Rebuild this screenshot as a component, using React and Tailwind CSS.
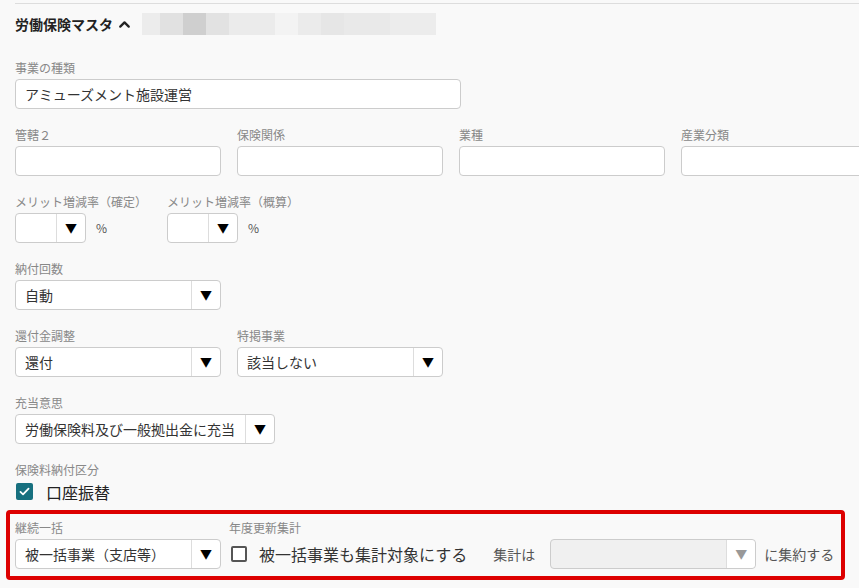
import React from "react";
import { ChevronUp } from "lucide-react";

const font = { fontFamily: '"Noto Sans CJK JP", "Noto Sans", sans-serif' };

function Label({ children }) {
  return (
    <div className="h-[16px] text-[12px] leading-[16px] text-[#888] whitespace-nowrap">
      {children}
    </div>
  );
}

function TextInput({ value = "", width = "w-[206px]" }) {
  return (
    <div
      className={`${width} h-[30px] bg-white border border-[#ccc] rounded-[4px] px-[9px] flex items-center text-[14px] text-[#333]`}
    >
      {value}
    </div>
  );
}

function Select({ value = "", width = "w-[206px]", disabled = false }) {
  return (
    <div
      className={`${width} h-[30px] border border-[#ccc] rounded-[4px] flex items-stretch text-[14px] text-[#333] ${
        disabled ? "bg-[#f0f0f0]" : "bg-white"
      }`}
    >
      <div className="flex-1 flex items-center pl-[9px] whitespace-nowrap overflow-hidden">
        {value}
      </div>
      <div
        className={`w-[29px] border-l border-[#ddd] flex items-center justify-center text-[12px] ${
          disabled ? "text-[#999] bg-white rounded-r-[4px]" : "text-black"
        }`}
      >
        ▼
      </div>
    </div>
  );
}

function Field({ label, children, className = "" }) {
  return (
    <div className={`flex flex-col gap-[3px] ${className}`}>
      <Label>{label}</Label>
      {children}
    </div>
  );
}

// redacted area in the header, drawn as flat grey blocks
function Blur() {
  const blocks = [
    ["w-[18px]", "bg-[#ececec]"],
    ["w-[23px]", "bg-[#e1e1e1]"],
    ["w-[23px]", "bg-[#cfcfcf]"],
    ["w-[23px]", "bg-[#e2e2e2]"],
    ["w-[46px]", "bg-[#ebebeb]"],
    ["w-[23px]", "bg-[#f3f3f3]"],
    ["w-[23px]", "bg-[#ebebeb]"],
    ["w-[23px]", "bg-[#e6e6e6]"],
    ["w-[46px]", "bg-[#e9e9e9]"],
    ["w-[46px]", "bg-[#ececec]"],
  ];
  return (
    <div className="flex h-[22px]">
      {blocks.map(([w, c], i) => (
        <div key={i} className={`${w} ${c}`} />
      ))}
    </div>
  );
}

export default function App() {
  return (
    <div
      className="w-[859px] h-[588px] overflow-hidden bg-[#f9f9f9] pt-[3px]"
      style={font}
    >
      <div className="ml-[15px] border-t border-[#ddd]" />
      <div className="px-[15px]">
        <div className="flex items-center h-[22px] mt-[9px]">
          <span className="text-[14px] font-bold text-[#222]">労働保険マスタ</span>
          <ChevronUp className="ml-[3px] w-[17px] h-[17px] text-[#222]" strokeWidth={3.2} />
          <div className="ml-[9px]">
            <Blur />
          </div>
        </div>

        <Field label="事業の種類" className="mt-[25px]">
          <TextInput value="アミューズメント施設運営" width="w-[446px]" />
        </Field>

        <div className="flex gap-[16px] mt-[18px]">
          <Field label="管轄２">
            <TextInput />
          </Field>
          <Field label="保険関係">
            <TextInput />
          </Field>
          <Field label="業種">
            <TextInput />
          </Field>
          <Field label="産業分類">
            <TextInput />
          </Field>
        </div>

        <div className="flex mt-[18px]">
          {["メリット増減率（確定）", "メリット増減率（概算）"].map((l) => (
            <Field key={l} label={l} className="w-[152px]">
              <div className="flex items-center gap-[10px]">
                <Select width="w-[71px]" />
                <span className="text-[12px] text-[#555]">%</span>
              </div>
            </Field>
          ))}
        </div>

        <Field label="納付回数" className="mt-[18px]">
          <Select value="自動" />
        </Field>

        <div className="flex gap-[16px] mt-[18px]">
          <Field label="還付金調整">
            <Select value="還付" />
          </Field>
          <Field label="特掲事業">
            <Select value="該当しない" />
          </Field>
        </div>

        <Field label="充当意思" className="mt-[18px]">
          <Select value="労働保険料及び一般拠出金に充当" width="w-[260px]" />
        </Field>

        <div className="mt-[18px]">
          <Label>保険料納付区分</Label>
          <div className="flex items-center mt-[5px] h-[17px]">
            <div className="ml-[1px] w-[17px] h-[17px] rounded-[2px] bg-[#17707f] flex items-center justify-center">
              <svg viewBox="0 0 16 16" className="w-[13px] h-[13px]">
                <path
                  d="M3 8.5l3.2 3L13 4.5"
                  fill="none"
                  stroke="white"
                  strokeWidth="2.2"
                  strokeLinecap="round"
                  strokeLinejoin="round"
                />
              </svg>
            </div>
            <span className="ml-[13px] text-[16px] text-[#222]">口座振替</span>
          </div>
        </div>
      </div>

      <div className="ml-[6px] mt-[10px] w-[839px] h-[70px] border-4 border-[#dd0000] rounded-[4px] pl-[5px] pt-[6px]">
        <div className="flex">
          <Field label="継続一括">
            <Select value="被一括事業（支店等）" />
          </Field>
          <div className="ml-[8px] flex flex-col gap-[3px]">
            <Label>年度更新集計</Label>
            <div className="h-[30px] flex items-center text-[#333]">
              <div className="ml-[2px] w-[16px] h-[16px] border-2 border-[#555] rounded-[2px] bg-white" />
              <span className="ml-[12px] text-[16px]">被一括事業も集計対象にする</span>
              <span className="ml-[26px] text-[14px] text-[#555]">集計は</span>
              <div className="ml-[15px]">
                <Select width="w-[206px]" disabled />
              </div>
              <span className="ml-[8px] text-[14px] text-[#555]">に集約する</span>
            </div>
          </div>
        </div>
      </div>
    </div>
  );
}
